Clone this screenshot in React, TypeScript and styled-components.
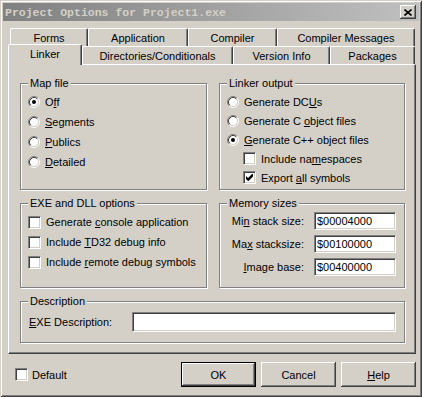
import React from "react";
import styled, { createGlobalStyle } from "styled-components";

const GlobalStyle = createGlobalStyle`
  html, body {
    margin: 0;
    padding: 0;
    background: #d4d0c8;
  }
  body {
    font-family: "Liberation Sans", Arial, sans-serif;
    font-size: 11px;
    color: #000;
  }
`;

const Window = styled.div`
  width: 422px;
  height: 397px;
  box-sizing: border-box;
  padding: 3px;
  background: #d4d0c8;
  box-shadow: inset 1px 1px 0 #d4d0c8, inset -1px -1px 0 #404040,
    inset 2px 2px 0 #fff, inset -2px -2px 0 #808080;
  display: flex;
  flex-direction: column;
`;

const TitleBar = styled.div`
  height: 18px;
  flex: none;
  display: flex;
  align-items: center;
  justify-content: space-between;
  padding: 0 3px 0 2px;
  background: linear-gradient(to right, #808080, #c0c0c0);
`;

const TitleText = styled.span`
  font-family: "Liberation Mono", "Courier New", monospace;
  font-weight: bold;
  font-size: 11.5px;
  color: #d4d0c8;
  white-space: nowrap;
`;

const CloseButton = styled.div`
  width: 16px;
  height: 14px;
  display: flex;
  align-items: center;
  justify-content: center;
  background: #d4d0c8;
  box-shadow: inset -1px -1px 0 #404040, inset 1px 1px 0 #fff,
    inset -2px -2px 0 #808080;
`;

const Body = styled.div`
  flex: 1;
  display: flex;
  flex-direction: column;
  padding: 7px 3px 0 5px;
`;

const TabRow = styled.div<{ $offset?: number }>`
  display: flex;
  height: 18px;
  padding-left: ${(p) => p.$offset || 0}px;
`;

const Tab = styled.div<{ $width: number; $selected?: boolean }>`
  width: ${(p) => p.$width}px;
  height: ${(p) => (p.$selected ? 21 : 18)}px;
  margin-top: ${(p) => (p.$selected ? -2 : 0)}px;
  position: relative;
  z-index: ${(p) => (p.$selected ? 2 : 1)};
  box-sizing: border-box;
  padding-top: 3px;
  line-height: 13px;
  text-align: center;
  background: #d4d0c8;
  border-top: 1px solid #fff;
  border-left: 1px solid #fff;
  border-right: 1px solid #404040;
  border-radius: 2px 2px 0 0;
  box-shadow: inset -1px 0 0 #808080;
  white-space: nowrap;
`;

const Panel = styled.div`
  height: 290px;
  box-sizing: border-box;
  border-top: 1px solid #fff;
  border-left: 1px solid #fff;
  border-right: 1px solid #404040;
  border-bottom: 1px solid #404040;
  box-shadow: inset -1px -1px 0 #808080;
  padding: 18px 10px 0 11px;
  display: grid;
  grid-template-columns: 187px 186px;
  grid-template-rows: 107px 85px 42px;
  column-gap: 12px;
  row-gap: 13px;
`;

const Group = styled.div<{ $span?: boolean }>`
  position: relative;
  box-sizing: border-box;
  border: 1px solid #808080;
  box-shadow: inset 1px 1px 0 #fff, 1px 1px 0 #fff;
  grid-column: ${(p) => (p.$span ? "1 / span 2" : "auto")};
`;

const GroupTitle = styled.span`
  position: absolute;
  top: -7px;
  left: 7px;
  padding: 0 2px;
  line-height: 13px;
  background: #d4d0c8;
  white-space: nowrap;
`;

const OptionList = styled.div<{ $top: number }>`
  display: flex;
  flex-direction: column;
  padding: ${(p) => p.$top}px 0 0 7px;
`;

const Option = styled.div<{ $height: number; $indent?: number }>`
  height: ${(p) => p.$height}px;
  display: flex;
  align-items: center;
  gap: 5px;
  padding-left: ${(p) => p.$indent || 0}px;
  white-space: nowrap;
`;

const Acc = styled.span`
  text-decoration: underline;
  text-underline-offset: 1px;
`;

const CheckBox = styled.span`
  width: 13px;
  height: 13px;
  flex: none;
  box-sizing: border-box;
  background: #fff;
  border: 1px solid;
  border-color: #808080 #fff #fff #808080;
  box-shadow: inset 1px 1px 0 #404040, inset -1px -1px 0 #d4d0c8;
  display: flex;
  align-items: center;
  justify-content: center;
`;

const FieldGrid = styled.div`
  display: grid;
  grid-template-columns: 1fr 82px;
  grid-auto-rows: 18px;
  column-gap: 10px;
  row-gap: 5px;
  padding: 8px 8px 0 0;
  align-items: center;
`;

const FieldLabel = styled.span`
  text-align: right;
  white-space: nowrap;
`;

const Edit = styled.input<{ $height: number }>`
  height: ${(p) => p.$height}px;
  width: 100%;
  box-sizing: border-box;
  margin: 0;
  padding: 0 0 0 2px;
  font: inherit;
  color: #000;
  background: #fff;
  border: 1px solid;
  border-color: #808080 #fff #fff #808080;
  box-shadow: inset 1px 1px 0 #404040, inset -1px -1px 0 #d4d0c8;
  outline: none;
`;

const DescRow = styled.div`
  height: 100%;
  display: flex;
  align-items: center;
  padding: 0 8px 0 8px;
`;

const DescLabel = styled.span`
  width: 103px;
  flex: none;
  white-space: nowrap;
`;

const Footer = styled.div`
  display: flex;
  align-items: center;
  margin-top: 8px;
  height: 25px;
`;

const FooterCheck = styled.div`
  display: flex;
  align-items: center;
  gap: 4px;
  margin-left: 7px;
  margin-right: auto;
`;

const ButtonGroup = styled.div`
  display: flex;
  gap: 5px;
`;

const Button = styled.div<{ $default?: boolean }>`
  width: 75px;
  height: 25px;
  box-sizing: border-box;
  display: flex;
  align-items: center;
  justify-content: center;
  background: #d4d0c8;
  border: ${(p) => (p.$default ? "1px solid #000" : "none")};
  box-shadow: inset -1px -1px 0 #404040, inset 1px 1px 0 #fff,
    inset -2px -2px 0 #808080;
`;

const RadioIcon = ({ checked }: { checked?: boolean }) => (
  <svg width="12" height="12" viewBox="0 0 12 12" style={{ flex: "none" }}>
    <circle cx="6" cy="6" r="4.2" fill="#fff" />
    <path d="M2.11 9.89A5.5 5.5 0 0 1 9.89 2.11" stroke="#808080" fill="none" />
    <path d="M9.89 2.11A5.5 5.5 0 0 1 2.11 9.89" stroke="#fff" fill="none" />
    <path d="M2.82 9.18A4.5 4.5 0 0 1 9.18 2.82" stroke="#404040" fill="none" />
    <path d="M9.18 2.82A4.5 4.5 0 0 1 2.82 9.18" stroke="#d4d0c8" fill="none" />
    {checked && <circle cx="6" cy="6" r="2" fill="#000" />}
  </svg>
);

const Check = ({ checked }: { checked?: boolean }) => (
  <CheckBox>
    {checked && (
      <svg width="7" height="7" viewBox="0 0 7 7">
        <polygon points="0,2 2,4 6,0 7,0 7,2.5 2.5,7 2,7 0,5" fill="#000" />
      </svg>
    )}
  </CheckBox>
);

export default function App() {
  return (
    <>
      <GlobalStyle />
      <Window>
        <TitleBar>
          <TitleText>Project Options for Project1.exe</TitleText>
          <CloseButton>
            <svg width="8" height="7" viewBox="0 0 8 7">
              <path d="M0.5 0.5L7.5 6.5M7.5 0.5L0.5 6.5" stroke="#000" strokeWidth="1.6" />
            </svg>
          </CloseButton>
        </TitleBar>

        <Body>
          <TabRow $offset={2}>
            <Tab $width={78}>Forms</Tab>
            <Tab $width={100}>Application</Tab>
            <Tab $width={89}>Compiler</Tab>
            <Tab $width={138}>Compiler Messages</Tab>
          </TabRow>
          <TabRow>
            <Tab $width={74} $selected>Linker</Tab>
            <Tab $width={151}>Directories/Conditionals</Tab>
            <Tab $width={97}>Version Info</Tab>
            <Tab $width={85}>Packages</Tab>
          </TabRow>

          <Panel>
            <Group>
              <GroupTitle>Map file</GroupTitle>
              <OptionList $top={8}>
                <Option $height={20}>
                  <RadioIcon checked />
                  <span>O<Acc>f</Acc>f</span>
                </Option>
                <Option $height={20}>
                  <RadioIcon />
                  <span><Acc>S</Acc>egments</span>
                </Option>
                <Option $height={20}>
                  <RadioIcon />
                  <span><Acc>P</Acc>ublics</span>
                </Option>
                <Option $height={20}>
                  <RadioIcon />
                  <span><Acc>D</Acc>etailed</span>
                </Option>
              </OptionList>
            </Group>

            <Group>
              <GroupTitle>Linker output</GroupTitle>
              <OptionList $top={8}>
                <Option $height={19}>
                  <RadioIcon />
                  <span>Generate DC<Acc>U</Acc>s</span>
                </Option>
                <Option $height={19}>
                  <RadioIcon />
                  <span>Generate C <Acc>o</Acc>bject files</span>
                </Option>
                <Option $height={19}>
                  <RadioIcon checked />
                  <span><Acc>G</Acc>enerate C++ object files</span>
                </Option>
                <Option $height={19} $indent={16}>
                  <Check />
                  <span>Include na<Acc>m</Acc>espaces</span>
                </Option>
                <Option $height={19} $indent={16}>
                  <Check checked />
                  <span>Export <Acc>a</Acc>ll symbols</span>
                </Option>
              </OptionList>
            </Group>

            <Group>
              <GroupTitle>EXE and DLL options</GroupTitle>
              <OptionList $top={8}>
                <Option $height={20}>
                  <Check />
                  <span>Generate <Acc>c</Acc>onsole application</span>
                </Option>
                <Option $height={20}>
                  <Check />
                  <span>Include <Acc>T</Acc>D32 debug info</span>
                </Option>
                <Option $height={20}>
                  <Check />
                  <span>Include <Acc>r</Acc>emote debug symbols</span>
                </Option>
              </OptionList>
            </Group>

            <Group>
              <GroupTitle>Memory sizes</GroupTitle>
              <FieldGrid>
                <FieldLabel>Mi<Acc>n</Acc> stack size:</FieldLabel>
                <Edit $height={18} readOnly value="$00004000" />
                <FieldLabel>Ma<Acc>x</Acc> stacksize:</FieldLabel>
                <Edit $height={18} readOnly value="$00100000" />
                <FieldLabel><Acc>I</Acc>mage base:</FieldLabel>
                <Edit $height={18} readOnly value="$00400000" />
              </FieldGrid>
            </Group>

            <Group $span>
              <GroupTitle>Description</GroupTitle>
              <DescRow>
                <DescLabel><Acc>E</Acc>XE Description:</DescLabel>
                <Edit $height={20} readOnly value="" />
              </DescRow>
            </Group>
          </Panel>

          <Footer>
            <FooterCheck>
              <Check />
              <span>Default</span>
            </FooterCheck>
            <ButtonGroup>
              <Button $default>OK</Button>
              <Button>Cancel</Button>
              <Button><span><Acc>H</Acc>elp</span></Button>
            </ButtonGroup>
          </Footer>
        </Body>
      </Window>
    </>
  );
}
